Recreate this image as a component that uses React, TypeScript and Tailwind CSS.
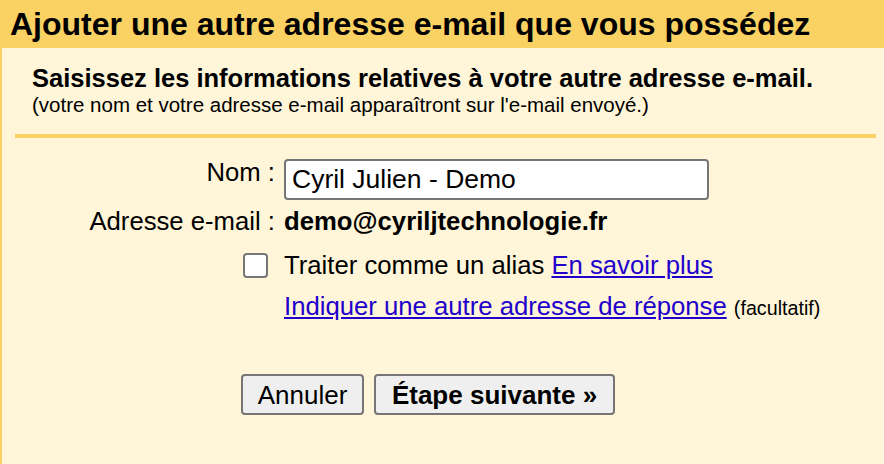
import React from "react";

export default function App() {
  return (
    <div
      className="w-[884px] h-[464px] overflow-hidden bg-[#fff5d8] text-black"
      style={{ fontFamily: '"Liberation Sans", Arial, sans-serif' }}
    >
      <div className="h-[48px] bg-[#fad163] flex items-center pl-[10px]">
        <h1 className="text-[32px] font-bold leading-none">
          Ajouter une autre adresse e-mail que vous possédez
        </h1>
      </div>
      <div className="h-[416px] border-l-2 border-[#fad163] pl-[13px] pr-[8px]">
        <div className="pl-[17px] pt-[15px] pb-[17px]">
          <div className="text-[25.5px] font-bold leading-[30px]">
            Saisissez les informations relatives à votre autre adresse e-mail.
          </div>
          <div className="text-[20.5px] leading-[24px]">
            (votre nom et votre adresse e-mail apparaîtront sur l'e-mail envoyé.)
          </div>
        </div>
        <div className="h-[4px] bg-[#fad163]" />
        <div className="grid grid-cols-[260px_1fr] gap-x-[9px] mt-[21px] text-[25.7px]">
          <div className="text-right leading-[26px]">Nom :</div>
          <div>
            <div className="w-[425px] h-[41px] bg-white border-2 border-[#767676] rounded-[4px] flex items-center pl-[6px] leading-none text-[26.5px]">
              Cyril Julien - Demo
            </div>
          </div>
          <div className="text-right leading-[26px] mt-[8px]">Adresse e-mail :</div>
          <div className="font-bold leading-[26px] mt-[8px]">demo@cyriljtechnologie.fr</div>
          <div className="flex justify-end items-center mt-[18px]">
            <div className="w-[25px] h-[25px] rounded-[4px] border-2 border-[#767676] bg-white mr-[7px]" />
          </div>
          <div className="leading-[26px] mt-[18px]">
            Traiter comme un alias{" "}
            <a href="#" className="text-[#2200cc] underline">
              En savoir plus
            </a>
          </div>
          <div />
          <div className="leading-[26px] mt-[15px]">
            <a href="#" className="text-[#2200cc] underline">
              Indiquer une autre adresse de réponse
            </a>{" "}
            <span className="text-[19.7px]">(facultatif)</span>
          </div>
        </div>
        <div className="flex gap-[10px] pl-[226px] mt-[53px]">
          <button className="w-[123px] h-[41px] bg-[#efefef] border-2 border-[#767676] rounded-[4px] text-[26px] leading-none">
            Annuler
          </button>
          <button className="w-[241px] h-[41px] bg-[#efefef] border-2 border-[#767676] rounded-[4px] text-[26px] font-bold leading-none">
            Étape suivante »
          </button>
        </div>
      </div>
    </div>
  );
}
